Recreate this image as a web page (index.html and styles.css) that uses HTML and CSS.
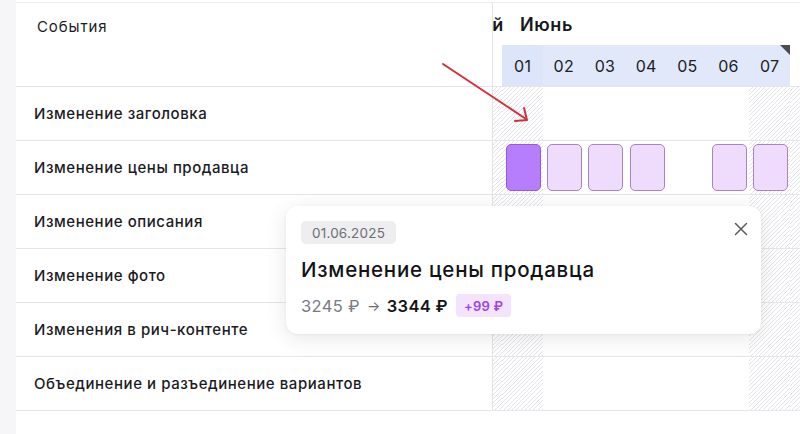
FILE: index.html
```html
<!DOCTYPE html>
<html lang="ru">
<head>
<meta charset="utf-8">
<link rel="stylesheet" href="styles.css">
</head>
<body>
<div class="page">
  <div class="strip"></div>
  <div class="panel">
    <div class="head">
      <div class="label head-label">События</div>
      <div class="cal-head">
        <div class="months">
          <div class="m-prev"><span>Май</span></div>
          <div class="m-cur">Июнь</div>
        </div>
        <div class="days date-row">
          <div class="d d-empty"></div>
          <div class="d dt dt-first">01</div>
          <div class="d dt">02</div>
          <div class="d dt">03</div>
          <div class="d dt">04</div>
          <div class="d dt">05</div>
          <div class="d dt">06</div>
          <div class="d dt dt-last">07<span class="corner"></span></div>
          <div class="d d-empty"></div>
        </div>
      </div>
    </div>

    <div class="row">
      <div class="label">Изменение заголовка</div>
      <div class="days">
        <div class="d hatch"></div><div class="d hatch"></div><div class="d"></div><div class="d"></div><div class="d"></div><div class="d"></div><div class="d"></div><div class="d hatch"></div><div class="d hatch"></div>
      </div>
    </div>
    <div class="row">
      <div class="label">Изменение цены продавца</div>
      <div class="days">
        <div class="d hatch"></div>
        <div class="d hatch"><div class="ev ev-on"></div></div>
        <div class="d"><div class="ev"></div></div>
        <div class="d"><div class="ev"></div></div>
        <div class="d"><div class="ev"></div></div>
        <div class="d"></div>
        <div class="d"><div class="ev"></div></div>
        <div class="d hatch"><div class="ev"></div></div>
        <div class="d hatch"></div>
      </div>
    </div>
    <div class="row">
      <div class="label">Изменение описания</div>
      <div class="days">
        <div class="d hatch"></div><div class="d hatch"></div><div class="d"></div><div class="d"></div><div class="d"></div><div class="d"></div><div class="d"></div><div class="d hatch"></div><div class="d hatch"></div>
      </div>
    </div>
    <div class="row">
      <div class="label">Изменение фото</div>
      <div class="days">
        <div class="d hatch"></div><div class="d hatch"></div><div class="d"></div><div class="d"></div><div class="d"></div><div class="d"></div><div class="d"></div><div class="d hatch"></div><div class="d hatch"></div>
      </div>
    </div>
    <div class="row">
      <div class="label">Изменения в рич-контенте</div>
      <div class="days">
        <div class="d hatch"></div><div class="d hatch"></div><div class="d"></div><div class="d"></div><div class="d"></div><div class="d"></div><div class="d"></div><div class="d hatch"></div><div class="d hatch"></div>
      </div>
    </div>
    <div class="row">
      <div class="label">Объединение и разъединение вариантов</div>
      <div class="days">
        <div class="d hatch"></div><div class="d hatch"></div><div class="d"></div><div class="d"></div><div class="d"></div><div class="d"></div><div class="d"></div><div class="d hatch"></div><div class="d hatch"></div>
      </div>
    </div>

    <div class="tooltip">
      <div class="chip">01.06.2025</div>
      <div class="tt-title">Изменение цены продавца</div>
      <div class="tt-price">
        <span class="old">3245 ₽</span>
        <span class="arrow">→</span>
        <span class="new">3344 ₽</span>
        <span class="delta">+99 ₽</span>
      </div>
      <svg class="close" width="14" height="14" viewBox="0 0 14 14"><path d="M1.5 1.5 L12.5 12.5 M12.5 1.5 L1.5 12.5" stroke="#5a5a60" stroke-width="1.5" stroke-linecap="round" fill="none"/></svg>
    </div>

    <svg class="pointer" width="100" height="70" viewBox="0 0 100 70">
      <path d="M3 2 L86 57" stroke="#d3303c" stroke-width="2" stroke-linecap="round" fill="none"/>
      <path d="M84 46 L87 58 L75 59" stroke="#d3303c" stroke-width="2" stroke-linecap="round" stroke-linejoin="round" fill="none"/>
    </svg>
  </div>
</div>
</body>
</html>
```

FILE: styles.css
```css
* { box-sizing: border-box; }
html, body { margin: 0; padding: 0; }
body {
  width: 800px;
  height: 434px;
  overflow: hidden;
  background: #ffffff;
  font-family: Inter, "Noto Sans", sans-serif;
  color: #1b1b1f;
}
.page {
  display: flex;
  height: 434px;
}
.strip {
  width: 16px;
  flex: none;
  background: #f6f6f8;
}
.panel {
  position: relative;
  flex: 1;
  margin-top: 2px;
  border-top: 1px solid #ececf0;
  background: #fff;
}
.head, .row {
  display: flex;
  border-bottom: 1px solid #e6e6ea;
}
.head { height: 84px; }
.row { height: 54px; }
.label {
  width: 477px;
  flex: none;
  border-right: 1px solid #e3e3e7;
  display: flex;
  align-items: center;
  padding-left: 18px;
  font-size: 15px;
  letter-spacing: 0.55px;
  font-weight: 500;
  color: #1b1b1f;
  white-space: nowrap;
}
.head-label {
  align-items: flex-start;
  padding-left: 21px;
  padding-top: 14px;
  font-weight: 400;
  font-size: 15px;
  letter-spacing: 0.9px;
}
.cal-head {
  flex: 1;
  display: flex;
  flex-direction: column;
  overflow: hidden;
}
.months {
  height: 42px;
  display: flex;
  align-items: center;
  font-size: 18px;
  letter-spacing: 0.6px;
  font-weight: 600;
  color: #18181c;
}
.m-prev {
  width: 11px;
  overflow: hidden;
  display: flex;
  justify-content: flex-end;
  white-space: nowrap;
}
.m-cur { margin-left: 16px; }
.days {
  flex: 1;
  display: grid;
  grid-template-columns: 9px repeat(8, 41.2px);
  overflow: hidden;
}
.date-row { height: 41px; flex: none; }
.d { position: relative; }
.dt {
  background: #e0e8fa;
  display: flex;
  align-items: center;
  justify-content: center;
  font-size: 16px;
  letter-spacing: 0.3px;
  color: #202024;
  padding-top: 1px;
}
.dt-first { background: #dce5f9; }
.corner {
  position: absolute;
  top: 0;
  right: 0;
  width: 0;
  height: 0;
  border-style: solid;
  border-width: 0 10px 10px 0;
  border-color: transparent #4a4a52 transparent transparent;
}
.hatch {
  background: repeating-linear-gradient(135deg, #ffffff 0 2.3px, #e4e4e8 2.3px 3px);
}
.ev {
  position: absolute;
  top: 3px;
  left: 4px;
  width: 35px;
  height: 47px;
  border-radius: 5px;
  background: #efdcfc;
  border: 1px solid #a884c4;
}
.ev-on {
  background: #b67dfc;
  border-color: #9658d8;
}
.tooltip {
  position: absolute;
  left: 270px;
  top: 203px;
  width: 475px;
  height: 128px;
  background: #fff;
  border-radius: 12px;
  box-shadow: 0 4px 22px rgba(20, 20, 40, 0.10), 0 1px 3px rgba(20, 20, 40, 0.05);
  padding: 15px 15px;
  display: flex;
  flex-direction: column;
  align-items: flex-start;
}
.chip {
  height: 23px;
  padding: 0 11px;
  border-radius: 5px;
  background: #eeeef1;
  color: #6d6d75;
  font-size: 13.5px;
  letter-spacing: 0.2px;
  display: flex;
  align-items: center;
}
.tt-title {
  margin-top: 14px;
  font-size: 20.5px;
  letter-spacing: 0.75px;
  font-weight: 500;
  color: #131316;
  line-height: 24px;
}
.tt-price {
  margin-top: 12px;
  display: flex;
  align-items: center;
  font-size: 16.5px;
  letter-spacing: 0.35px;
}
.old { color: #7a7a82; }
.arrow { color: #6a6a72; margin: 0 6px 0 7px; font-size: 14px; }
.new { color: #141417; font-weight: 600; }
.delta {
  margin-left: 8px;
  background: #f3e3fd;
  color: #9a45e6;
  font-size: 13px;
  letter-spacing: 0.2px;
  font-weight: 600;
  height: 23px;
  padding: 0 8px;
  border-radius: 4px;
  display: flex;
  align-items: center;
}
.close {
  position: absolute;
  right: 13px;
  top: 16px;
}
.pointer {
  position: absolute;
  left: 424px;
  top: 59px;
}
```
